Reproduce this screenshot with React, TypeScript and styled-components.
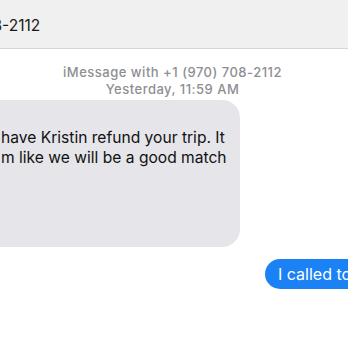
import React from "react";
import styled, { createGlobalStyle } from "styled-components";

const GlobalStyle = createGlobalStyle`
  html, body {
    margin: 0;
    padding: 0;
    background: #ffffff;
    overflow: hidden;
  }
  body {
    font-family: Inter, "Noto Sans", "Liberation Sans", sans-serif;
    -webkit-font-smoothing: antialiased;
  }
`;

const Window = styled.div`
  width: 348px;
  height: 348px;
  overflow: hidden;
  display: flex;
  flex-direction: column;
  background: #ffffff;
`;

const Header = styled.header`
  height: 49px;
  box-sizing: border-box;
  padding-top: 3px;
  flex: none;
  display: flex;
  align-items: center;
  background: #f0f0f0;
  border-bottom: 1px solid #d6d6d6;
  overflow: hidden;
`;

const Title = styled.span<{ $offset: number }>`
  margin-left: ${(p) => p.$offset}px;
  font-size: 15.5px;
  color: #1a1a1a;
  white-space: nowrap;
`;

const Transcript = styled.main`
  flex: 1;
  display: flex;
  flex-direction: column;
  padding-top: 15px;
  padding-right: 3px;
`;

const Meta = styled.div`
  text-align: center;
  font-size: 13px;
  line-height: 16.5px;
  letter-spacing: 0.5px;
  font-weight: 500;
  color: #8e8e93;
`;

const Received = styled.div<{ $bleed: number }>`
  align-self: flex-start;
  margin-top: 3px;
  margin-left: -${(p) => p.$bleed}px;
  width: ${(p) => 240 + p.$bleed}px;
  box-sizing: border-box;
  padding: 28px 15px 79px ${(p) => p.$bleed + 1}px;
  background: #e5e5ea;
  border-radius: 18px;
  font-size: 15.6px;
  line-height: 20px;
  color: #111111;
`;

const Line = styled.div`
  white-space: nowrap;
`;

const SentRow = styled.div`
  display: flex;
  margin-top: 12px;
  padding-left: 265px;
`;

const Sent = styled.div`
  flex: none;
  height: 30px;
  display: flex;
  align-items: center;
  padding: 0 14px 0 13px;
  background: #1b82f6;
  border-radius: 16px;
  font-size: 16px;
  color: #ffffff;
  white-space: nowrap;
`;

export default function App() {
  return (
    <>
      <GlobalStyle />
      <Window>
        <Header>
          <Title $offset={-90}>+1 (970) 708-2112</Title>
        </Header>
        <Transcript>
          <Meta>
            iMessage with +1 (970) 708-2112
            <br />
            Yesterday, 11:59 AM
          </Meta>
          <Received $bleed={120}>
            <Line>have Kristin refund your trip. It</Line>
            <Line>m like we will be a good match</Line>
          </Received>
          <SentRow>
            <Sent>I called today</Sent>
          </SentRow>
        </Transcript>
      </Window>
    </>
  );
}
